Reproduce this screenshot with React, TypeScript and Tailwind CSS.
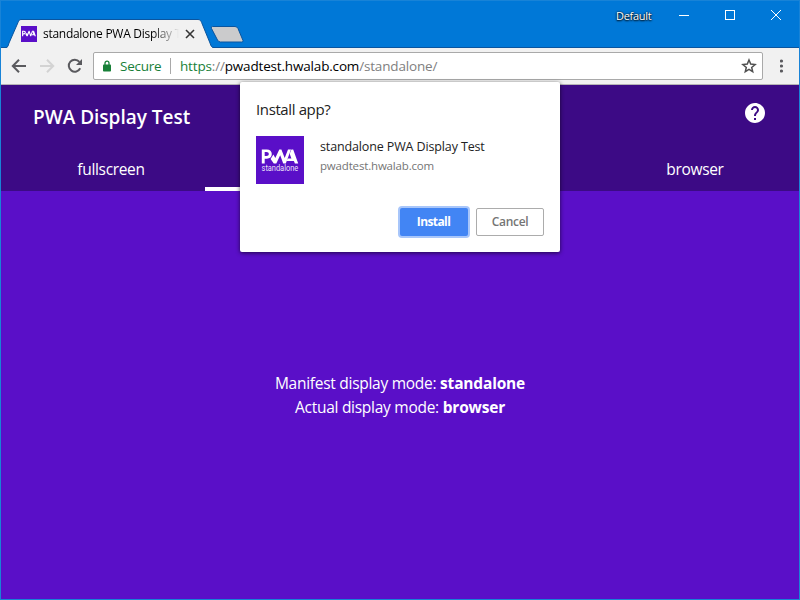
import React from 'react';

const ui = "font-['Open_Sans','Noto_Sans',sans-serif]";

function PwaMark({ size, caption }: { size: number; caption: boolean }) {
  return (
    <svg width={size} height={size} viewBox="0 0 48 48" className="block shrink-0 bg-[#5a0fc8]">
      <g fill="#fff" transform={caption ? undefined : 'translate(-3.4 -2) scale(1.14 1.2)'}>
        <path fillRule="evenodd" d="M5.8 13.4H10.8C14 13.4 15.8 15.3 15.8 18C15.8 20.8 14 22.7 10.8 22.7H8.7V27.4H5.8ZM8.7 16.1V20.1H10.5C12 20.1 12.8 19.3 12.8 18.1C12.8 16.9 12 16.1 10.5 16.1Z" />
        <path d="M14.6 22.9L17.4 18.5L19.3 21.9L23.3 13.4H25.4L28.7 22L32 13.4H35L29.8 27.4H27.2L24.2 19.2L20.3 27.4H17.8Z" />
        <path fillRule="evenodd" d="M30.7 24.9L31.6 22.4H35.4L33.7 17.8L35.4 13.4H37.2L42.2 27.4H38.9L37.9 24.9Z" />
      </g>
      {caption && (
        <text x="5.6" y="35" fontSize="8.2" textLength="36.6" lengthAdjust="spacingAndGlyphs" fill="#fff" fillOpacity="0.9" className="font-[Roboto]">
          standalone
        </text>
      )}
    </svg>
  );
}

function TitleBar() {
  return (
    <div className="relative h-[47px] bg-[#0078d7]">
      <svg width="798" height="47" className="absolute left-0 top-0">
        <path d="M0 46.5H798" stroke="#0a559f" />
        <path d="M5 47C7 46.5 7 45 8 42L17 21.5C17.8 19.4 18.4 18.5 20 18.5H197C199 18.5 199.8 19.6 200.6 21.5L209 42C210 45 210.5 46.5 212.5 47Z" fill="#f1f1f1" />
        <path d="M0 46.5H4.5C7 46.5 7 45 8 42L17 21.5C17.8 19.4 18.4 18.5 20 18.5H197C199 18.5 199.8 19.6 200.6 21.5L209 42C210 45 210.5 46.5 213 46.5" fill="none" stroke="#0a559f" />
        <path d="M211.5 25.5H234Q236 25.5 237 27.5L242 39.5Q242.5 41 240.5 41H219.5Q217.5 41 216.5 39L210.5 27.5Q209.5 25.5 211.5 25.5Z" fill="#cbcbcc" stroke="#0a559f" />
        <g stroke="#353535" strokeWidth="1.6">
          <path d="M185 29l8 8M193 29l-8 8" />
        </g>
        <g stroke="#fff" fill="none">
          <path d="M678 14.5h10" />
          <rect x="724.5" y="9.5" width="9" height="9" />
          <path d="M770 9l10 10M780 9l-10 10" />
        </g>
      </svg>
      <div className="absolute left-5 top-[25px]"><PwaMark size={16} caption={false} /></div>
      <div className="absolute left-[42px] top-[25px] w-[136px] overflow-hidden whitespace-nowrap bg-linear-to-r from-black from-80% to-transparent bg-clip-text text-[12px] leading-4 tracking-[-0.28px] text-transparent">
        standalone PWA Display Test
      </div>
      <div className="absolute left-[615px] top-[7px] text-[11px] leading-4 tracking-[-0.3px] text-white [text-shadow:0_0_2px_#000,0_1px_2px_#000]">Default</div>
    </div>
  );
}

function Toolbar() {
  return (
    <div className="flex h-[37px] items-center border-b border-[#b6b4b6] bg-[#f1f1f1] pl-2">
      <svg width="76" height="24" fill="none" strokeWidth="2" className="mr-2 shrink-0">
        <path d="M17 12H4.5M10 5.8L3.8 12l6.2 6.2" stroke="#5a5a5e" />
        <path d="M31 12h12.5M38 5.8l6.2 6.2-6.2 6.2" stroke="#d3d3d3" />
        <path d="M71.2 14.3a6 6 0 1 1-.8-6.5" stroke="#5a5a5e" />
        <path d="M73 5v6h-6z" fill="#5a5a5e" />
      </svg>
      <div className="flex h-7 w-[670px] shrink-0 items-center rounded-[2px] border border-[#a9a9a9] bg-white pl-[9px] pr-[5px] text-[13.5px]">
        <svg width="8" height="12" className="shrink-0">
          <path d="M2 5V3.2a2 2 0 0 1 4 0V5" fill="none" stroke="#188038" strokeWidth="1.3" />
          <rect y="4.5" width="8" height="7" rx=".8" fill="#188038" />
        </svg>
        <span className="ml-[9px] w-[50px] tracking-[-0.25px] text-[#188038]">Secure</span>
        <span className="mr-[9px] h-4 w-px bg-[#a9a9a9]" />
        <span className="flex-1 whitespace-nowrap tracking-[-0.17px] text-[#808080]"><span className="text-[#188038]">https</span>://<span className="text-black">pwadtest.hwalab.com</span>/standalone/</span>
        <svg width="16" height="16" viewBox="0 0 16 16" className="shrink-0">
          <path d="M8 2l1.7 4.1 4.4.4-3.4 2.9 1 4.3L8 11.4l-3.7 2.3 1-4.3-3.4-2.9 4.4-.4z" fill="none" stroke="#505050" strokeWidth="1.5" />
        </svg>
      </div>
      <svg width="4" height="16" className="ml-[17px] shrink-0" fill="#5a5a5e">
        <circle cx="1.5" cy="3" r="1.6" /><circle cx="1.5" cy="8" r="1.6" /><circle cx="1.5" cy="13" r="1.6" />
      </svg>
    </div>
  );
}

function InstallDialog() {
  return (
    <div className="absolute left-[239px] top-[81px] flex h-[170px] w-[320px] flex-col rounded-[2px] bg-white px-4 pb-4 pt-[17px] shadow-[0_1px_4px_rgba(0,0,0,0.65)]">
      <h2 className="text-[15px] leading-5 tracking-[-0.38px] text-[#222]">Install app?</h2>
      <div className="mt-[17px] flex">
        <PwaMark size={48} caption />
        <div className="ml-4 whitespace-nowrap">
          <div className="mt-px text-[12.5px] leading-5 tracking-[-0.13px] text-[#222]">standalone PWA Display Test</div>
          <div className="text-[11.5px] leading-[18px] tracking-[-0.17px] text-[#757575]">pwadtest.hwalab.com</div>
        </div>
      </div>
      <div className="mt-auto flex justify-end gap-2 text-[12px] font-bold">
        <button className="h-7 w-[68px] rounded-[2px] bg-[#4285f4] pr-px tracking-[-0.6px] text-white shadow-[0_0_0_2px_#a8c6fa]">Install</button>
        <button className="h-7 w-[68px] rounded-[2px] border border-[#acacac] font-semibold tracking-[-0.3px] text-[#757575]">Cancel</button>
      </div>
    </div>
  );
}

export default function App() {
  return (
    <div className={`relative flex h-[600px] w-[800px] flex-col overflow-hidden border border-[#1883d7] bg-[#5a0fc8] ${ui}`}>
      <TitleBar />
      <Toolbar />
      <header className="flex h-[106px] shrink-0 flex-col bg-[#3c0a85] text-white">
        <div className="flex h-[64px] items-center justify-between pl-8 pr-[34px]">
          <h1 className="text-[19px] font-semibold">PWA Display Test</h1>
          <svg width="20" height="20" className="mb-2" viewBox="2 2 20 20" fill="#fff">
            <path d="M12 2C6.48 2 2 6.48 2 12s4.48 10 10 10 10-4.48 10-10S17.52 2 12 2zm1 17h-2v-2h2v2zm2.07-7.75l-.9.92C13.45 12.9 13 13.5 13 15h-2v-.5c0-1.1.45-2.1 1.17-2.83l1.24-1.26c.37-.36.59-.86.59-1.41 0-1.1-.9-2-2-2s-2 .9-2 2H8c0-2.21 1.79-4 4-4s4 1.79 4 4c0 .88-.36 1.68-.93 2.25z" />
          </svg>
        </div>
        <nav className="flex h-[42px] pl-4 text-[15.5px] leading-[41px] tracking-[-0.33px]">
          <div className="w-[188px] text-center">fullscreen</div>
          <div className="w-[220px] border-b-4 border-white" />
          <div className="w-[209px]" />
          <div className="w-[122px] text-center">browser</div>
        </nav>
      </header>
      <main className="flex flex-1 flex-col items-center justify-center text-[15.5px] leading-6 tracking-[-0.27px] text-white">
        <p>Manifest display mode: <b className="tracking-[-0.18px]">standalone</b></p>
        <p>Actual display mode: <b className="tracking-[-0.18px]">browser</b></p>
      </main>
      <InstallDialog />
    </div>
  );
}
